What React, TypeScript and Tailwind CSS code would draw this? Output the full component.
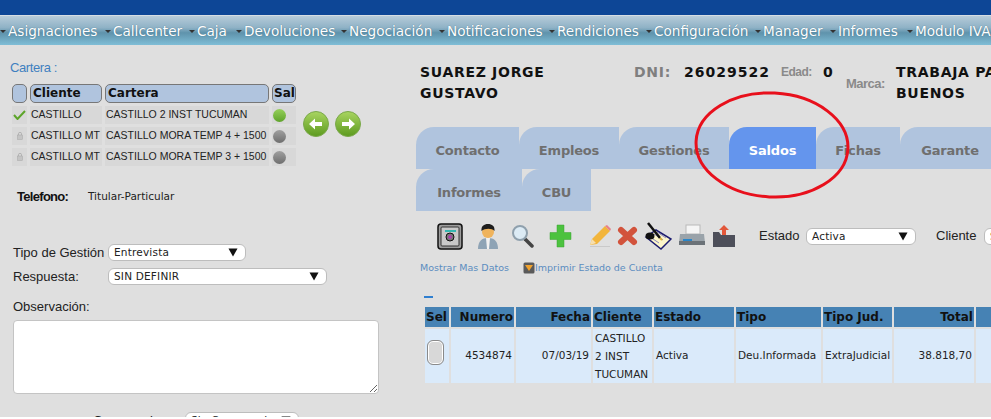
const menu = [
  { label: "Asignaciones", cls: "w-[105px]" },
  { label: "Callcenter", cls: "w-[84px]" },
  { label: "Caja", cls: "w-[47px]" },
  { label: "Devoluciones", cls: "w-[105px]" },
  { label: "Negociación", cls: "w-[98px]" },
  { label: "Notificaciones", cls: "w-[110px]" },
  { label: "Rendiciones", cls: "w-[97px]" },
  { label: "Configuración", cls: "w-[109px]" },
  { label: "Manager", cls: "w-[75px]" },
  { label: "Informes", cls: "w-[77px]" },
  { label: "Modulo IVA", cls: "w-[90px]" },
];

const tabsOne = [
  { label: "Contacto", cls: "w-[103px]" },
  { label: "Empleos", cls: "w-[100px]" },
  { label: "Gestiones", cls: "w-[110px]" },
  { label: "Saldos", cls: "w-[87px]", active: true },
  { label: "Fichas", cls: "w-[84px]" },
  { label: "Garante", cls: "w-[100px]" },
];

const tabsTwo = [
  { label: "Informes", cls: "w-[106px]" },
  { label: "CBU", cls: "w-[69px]" },
];

const carteras = [
  { cliente: "CASTILLO", cartera: "CASTILLO 2 INST TUCUMAN", active: true },
  { cliente: "CASTILLO MT", cartera: "CASTILLO MORA TEMP 4 + 1500" },
  { cliente: "CASTILLO MT", cartera: "CASTILLO MORA TEMP 3 + 1500" },
];

const Caret = () => (
  <svg width="10" height="9" viewBox="0 0 10 9" className="shrink-0">
    <path d="M0.5 0.5h9L5 8.5z" fill="#111" />
  </svg>
);

const Select = ({ text, cls }: { text: string; cls: string }) => (
  <div
    className={`flex items-center justify-between h-[17px] bg-white border border-[#bdbdbd] rounded-[6px] pl-[5px] pr-[7px] text-[10.5px] leading-[15px] whitespace-nowrap text-[#222] font-['DejaVu_Sans',sans-serif] tracking-[0.2px] ${cls}`}
  >
    <span>{text}</span>
    <Caret />
  </div>
);

const ArrowButton = ({ dir }: { dir: "left" | "right" }) => (
  <svg width="26" height="26" viewBox="0 0 26 26">
    <defs>
      <linearGradient id={`g-${dir}`} x1="0" y1="0" x2="0" y2="1">
        <stop offset="0" stopColor="#a9d561" />
        <stop offset="1" stopColor="#5c9a1f" />
      </linearGradient>
    </defs>
    <circle cx="13" cy="13" r="12.5" fill={`url(#g-${dir})`} stroke="#7aa84a" />
    <path
      d={dir === "left" ? "M6 13l6-5.5v3.5h7v4h-7v3.5z" : "M20 13l-6-5.5v3.5H7v4h7v3.5z"}
      fill="#fff"
    />
  </svg>
);

const SafeIcon = () => (
  <svg width="26" height="27" viewBox="0 0 26 27" className="shrink-0">
    <rect x="1" y="1" width="24" height="25" rx="3" fill="#9c9c9c" stroke="#111" strokeWidth="1.5" />
    <rect x="4" y="4" width="18" height="19" rx="1" fill="#c9c9c9" stroke="#333" />
    <rect x="8" y="7" width="11" height="2" fill="#34b7b0" />
    <circle cx="13" cy="14" r="4" fill="#777" stroke="#111" />
    <circle cx="13" cy="14" r="1.800" fill="#b13bb5" />
  </svg>
);

const PersonIcon = () => (
  <svg width="22" height="27" viewBox="0 0 22 27">
    <path d="M1 26c0-8 4-11 10-11s10 3 10 11z" fill="#8ea3b5" />
    <path d="M9 15h4l-1 11h-2z" fill="#f1f1f1" />
    <circle cx="11" cy="9" r="6" fill="#efb35c" />
    <path d="M4.5 8C4 3 7 1 11 1s7 2 6.5 7C15 5 8 5 4.5 8z" fill="#1d1d1d" />
  </svg>
);

const SearchIcon = () => (
  <svg width="23" height="24" viewBox="0 0 23 24">
    <path d="M14 15l7 7" stroke="#444" strokeWidth="3.5" strokeLinecap="round" />
    <circle cx="9" cy="9" r="7" fill="#dcebf5" stroke="#8fa0ad" strokeWidth="2" />
  </svg>
);

const PlusIcon = () => (
  <svg width="23" height="24" viewBox="0 0 23 24">
    <path d="M8 1h7v7.500h7v7h-7V23H8v-7.500H1v-7h7z" fill="#4cc23f" stroke="#3aa232" strokeWidth="0.5" />
  </svg>
);

const PencilIcon = () => (
  <svg width="23" height="24" viewBox="0 0 23 24">
    <path d="M1 21l2-6L16 2l5 5L8 20z" fill="#f2b53c" />
    <path d="M16 2l2-1 4 4-1 2z" fill="#e8808a" />
    <path d="M1 21l2-6 4 4z" fill="#f6dfb0" />
    <rect x="1" y="22" width="20" height="1" fill="#c9c9c9" />
  </svg>
);

const CrossIcon = () => (
  <svg width="23" height="24" viewBox="0 0 23 24">
    <path d="M5 6l13 12M18 6L5 18" stroke="#d2533c" strokeWidth="6" strokeLinecap="round" />
  </svg>
);

const NotesIcon = () => (
  <svg width="28" height="29" viewBox="0 0 28 29">
    <path d="M2 15l10-7 15 9-10 10z" fill="#fdf6c9" stroke="#1c1c70" strokeWidth="1.5" />
    <path d="M6 15l9 6M10 12l9 6M13 10l9 6" stroke="#6d6dc0" strokeWidth="0.8" />
    <path d="M4 1l12 15" stroke="#111" strokeWidth="2.500" />
    <ellipse cx="6" cy="14" rx="4.500" ry="3.500" fill="#111" />
    <path d="M16 16l2 2" stroke="#d9b23a" strokeWidth="2" />
  </svg>
);

const PrinterIcon = () => (
  <svg width="28" height="24" viewBox="0 0 28 24">
    <rect x="8" y="1" width="14" height="9" fill="#f5f5f5" stroke="#b9b9b9" />
    <path d="M2 10h24l1 9H1z" fill="#9aa3aa" />
    <rect x="1" y="17" width="26" height="4" fill="#6b7278" />
    <rect x="5" y="15" width="9" height="2" fill="#2a86c9" />
  </svg>
);

const FolderIcon = () => (
  <svg width="24" height="24" viewBox="0 0 24 24">
    <path d="M1 8h6l2 3h14v12H1z" fill="#4d4f5a" />
    <path d="M12 1l5 5h-3v5h-4V6H7z" fill="#e2573a" />
  </svg>
);

const Coin = () => (
  <svg width="12" height="12" viewBox="0 0 12 12" className="shrink-0">
    <rect x="0.500" y="0.500" width="11" height="11" rx="1.500" fill="#5a5a5a" />
    <path d="M2 3h8L6 9z" fill="#f0a22e" />
  </svg>
);

const Dot = ({ on }: { on?: boolean }) => (
  <div className={`w-[13px] h-[13px] rounded-full ${on ? "bg-[linear-gradient(180deg,#95d05a,#5fa32b)]" : "bg-[linear-gradient(180deg,#a0a0a0,#6e6e6e)]"}`} />
);

const Lock = () => (
  <svg width="6" height="8" viewBox="0 0 6 8">
    <rect x="0.500" y="3" width="5" height="4.500" fill="#c4c4c4" stroke="#a5a5a5" strokeWidth="0.500" />
    <path d="M1.500 3V1.800a1.500 1.500 0 0 1 3 0V3" fill="none" stroke="#a5a5a5" strokeWidth="0.700" />
  </svg>
);

const headCell = "bg-[#4682b4] text-[#111] font-bold text-[12px] h-[20px] px-[1px] align-middle border-0";
const bodyCell = "bg-[#daeafa] text-[#222] text-[10.5px] align-middle px-[2px] border-0";

export default function App() {
  return (
    <div className="w-[991px] h-[419px] overflow-hidden bg-white">
      <div className="relative h-[417px] overflow-hidden bg-[#dfdfdf] font-['DejaVu_Sans',sans-serif]">
        {/* top bars */}
        <div className="h-[15px] bg-[#0d4696]" />
        <div className="flex h-[30px] items-center pt-[2px] border-t border-[#d5dde3] bg-[linear-gradient(180deg,#b6cbd9_0%,#8fb2c6_40%,#5f93ac_58%,#7fbdd6_100%)] overflow-hidden whitespace-nowrap">
          {menu.map((m) => (
            <div key={m.label} className={`flex items-center shrink-0 ${m.cls}`}>
              <span className="w-0 h-0 mr-[3px] border-x-[3px] border-x-transparent border-t-[3px] border-t-[#333]" />
              <span className="text-[13.6px] text-white [text-shadow:0_0_1px_#3d6a82] -ml-[1px]">{m.label}</span>
            </div>
          ))}
        </div>

        <div className="flex">
          {/* left column */}
          <div className="w-[416px] shrink-0 pt-[15px] font-['Liberation_Sans',sans-serif]">
            <div className="pl-[10px] text-[13px] leading-[15px] text-[#3f7fbf] tracking-[-0.4px]">Cartera :</div>
            <div className="flex items-start pl-[12px] mt-[9px]">
              <div className="flex flex-col gap-[3px] w-[284px]">
                <div className="flex gap-[3px] h-[19px] font-['DejaVu_Sans',sans-serif] text-[12px] font-bold text-[#111]">
                  <div className="w-[15px] bg-[#b0c4de] border border-[#777] rounded-[5px]" />
                  <div className="w-[72px] bg-[#b0c4de] border border-[#777] rounded-[5px] pl-[2px] leading-[17px]">Cliente</div>
                  <div className="w-[164px] bg-[#b0c4de] border border-[#777] rounded-[5px] pl-[2px] leading-[17px]">Cartera</div>
                  <div className="w-[24px] bg-[#b0c4de] border border-[#777] rounded-[5px] pl-[1px] leading-[17px]">Sal</div>
                </div>
                {carteras.map((c) => (
                  <div key={c.cartera} className="flex gap-[3px] h-[18px] text-[10.5px] leading-[17px] text-[#222] whitespace-nowrap">
                    <div className="w-[15px] bg-[#d8d8d8] flex items-center justify-center">
                      {c.active ? (
                        <svg width="13" height="10" viewBox="0 0 13 10">
                          <path d="M1 5l3.500 4L12 1" fill="none" stroke="#5da52a" strokeWidth="2" />
                        </svg>
                      ) : (
                        <Lock />
                      )}
                    </div>
                    <div className="w-[72px] bg-[#d8d8d8] pl-[1px] overflow-hidden">{c.cliente}</div>
                    <div className="w-[164px] bg-[#d8d8d8] pl-[1px] overflow-hidden">{c.cartera}</div>
                    <div className="w-[24px] bg-[#d8d8d8] flex items-center pl-[1px]">
                      <Dot on={c.active} />
                    </div>
                  </div>
                ))}
              </div>
              <div className="flex gap-[6px] ml-[7px] mt-[27px]">
                <ArrowButton dir="left" />
                <ArrowButton dir="right" />
              </div>
            </div>

            <div className="flex items-center pl-[17px] mt-[21px]">
              <span className="w-[71px] text-[13px] font-bold tracking-[-0.7px] text-[#111]">Telefono:</span>
              <span className="font-['DejaVu_Sans',sans-serif] text-[10.5px] text-[#222]">Titular-Particular</span>
            </div>

            <div className="flex items-center pl-[13px] mt-[37px] text-[13px] leading-[17px] text-[#222]">
              <span className="w-[95px]">Tipo de Gestión</span>
              <Select text="Entrevista" cls="w-[138px]" />
            </div>
            <div className="flex items-center pl-[13px] mt-[7px] text-[13px] leading-[17px] text-[#222]">
              <span className="w-[95px]">Respuesta:</span>
              <Select text="SIN DEFINIR" cls="w-[219px]" />
            </div>
            <div className="pl-[13px] mt-[14px] text-[13px] leading-[15px] text-[#222]">Observación:</div>
            <div className="ml-[13px] mt-[6px] w-[366px]">
              <textarea readOnly className="block w-full h-[74px] bg-white border border-[#c4c4c4] rounded-[4px] outline-none" />
            </div>
            <div className="flex items-center pl-[93px] mt-[18px] text-[13px] leading-[17px] text-[#222]">
              <span className="w-[92px]">Compromiso:</span>
              <Select text="Sin Compromiso" cls="w-[114px]" />
            </div>
          </div>

          {/* right column */}
          <div className="flex-1 min-w-0 overflow-hidden">
            <div className="flex items-start pt-[17px] pl-[4px] h-[82px] whitespace-nowrap text-[14px] font-bold text-[#111] leading-[21px] tracking-[0.7px]">
              <div className="w-[214px] shrink-0">
                SUAREZ JORGE
                <br />
                GUSTAVO
              </div>
              <span className="text-[#7f7f7f] w-[50px] shrink-0">DNI:</span>
              <span className="tracking-[1px] w-[97px] shrink-0">26029522</span>
              <span className="font-['Liberation_Sans',sans-serif] text-[12px] text-[#8a8a8a] tracking-[-0.5px] w-[42px] shrink-0">Edad:</span>
              <span className="w-[23px] shrink-0">0</span>
              <span className="font-['Liberation_Sans',sans-serif] text-[13px] text-[#8a8a8a] tracking-[-0.5px] w-[50px] shrink-0 mt-[11px]">Marca:</span>
              <div className="shrink-0">
                TRABAJA PARTICULAR
                <br />
                BUENOS
              </div>
            </div>

            <div className="flex h-[42px] whitespace-nowrap">
              {tabsOne.map((t) => (
                <div
                  key={t.label}
                  className={`shrink-0 flex items-center justify-center pt-[6px] rounded-tl-[18px] text-[13px] tracking-[-0.2px] font-bold ${t.cls} ${t.active ? "bg-[#6495ed] text-white" : "bg-[#b0c4de] text-[#6f6f6f]"}`}
                >
                  {t.label}
                </div>
              ))}
            </div>
            <div className="flex h-[42px] whitespace-nowrap">
              {tabsTwo.map((t) => (
                <div key={t.label} className={`shrink-0 flex items-center justify-center pt-[6px] rounded-tl-[18px] bg-[#b0c4de] text-[#6f6f6f] text-[13px] tracking-[-0.2px] font-bold ${t.cls}`}>
                  {t.label}
                </div>
              ))}
            </div>

            <div className="flex items-center h-[28px] mt-[11px] pl-[21px] whitespace-nowrap [&>div]:shrink-0 [&>svg]:shrink-0">
              <SafeIcon />
              <div className="ml-[14px]"><PersonIcon /></div>
              <div className="ml-[12px]"><SearchIcon /></div>
              <div className="ml-[15px]"><PlusIcon /></div>
              <div className="ml-[17px]"><PencilIcon /></div>
              <div className="ml-[4px]"><CrossIcon /></div>
              <div className="ml-[5px]"><NotesIcon /></div>
              <div className="ml-[6px]"><PrinterIcon /></div>
              <div className="ml-[6px]"><FolderIcon /></div>
              <span className="ml-[23px] w-[47px] shrink-0 font-['Liberation_Sans',sans-serif] text-[13px] text-[#222]">Estado</span>
              <Select text="Activa" cls="w-[110px]" />
              <span className="ml-[20px] w-[48px] font-['Liberation_Sans',sans-serif] text-[13px] text-[#222] shrink-0">Cliente</span>
              <Select text="Sin" cls="w-[60px]" />
            </div>

            <div className="flex items-center pl-[4px] mt-[11px] h-[14px] font-['DejaVu_Sans',sans-serif] text-[9.5px] text-[#5b8dbf] whitespace-nowrap">
              <span className="w-[103px]">Mostrar Mas Datos</span>
              <Coin />
              <span>Imprimir Estado de Cuenta</span>
            </div>

            <div className="ml-[8px] mt-[21px] w-[9px] h-[2px] bg-[#2f7fd0]" />

            <table className="ml-[7px] mt-[7px] table-fixed border-separate border-spacing-[2px] w-[615px] max-w-none whitespace-nowrap">
              <colgroup>
                <col className="w-[24px]" />
                <col className="w-[63px]" />
                <col className="w-[75px]" />
                <col className="w-[59px]" />
                <col className="w-[80px]" />
                <col className="w-[85px]" />
                <col className="w-[69px]" />
                <col className="w-[80px]" />
                <col className="w-[60px]" />
              </colgroup>
              <thead>
                <tr>
                  <th className={`${headCell} text-left`}>Sel</th>
                  <th className={`${headCell} text-right`}>Numero</th>
                  <th className={`${headCell} text-right`}>Fecha</th>
                  <th className={`${headCell} text-left`}>Cliente</th>
                  <th className={`${headCell} text-left`}>Estado</th>
                  <th className={`${headCell} text-left`}>Tipo</th>
                  <th className={`${headCell} text-left`}>Tipo Jud.</th>
                  <th className={`${headCell} text-right`}>Total</th>
                  <th className={headCell} />
                </tr>
              </thead>
              <tbody>
                <tr className="h-[54px]">
                  <td className={bodyCell}>
                    <div className="w-[17px] h-[25px] mb-[7px] rounded-[6px] border border-[#8a8a8a] bg-[#d8d8d8] shadow-[inset_0_0_0_1px_#fff]" />
                  </td>
                  <td className={`${bodyCell} text-right`}>4534874</td>
                  <td className={`${bodyCell} text-right`}>07/03/19</td>
                  <td className={`${bodyCell} whitespace-normal leading-[18px] px-[1px]`}>CASTILLO 2 INST TUCUMAN</td>
                  <td className={bodyCell}>Activa</td>
                  <td className={bodyCell}>Deu.Informada</td>
                  <td className={bodyCell}>ExtraJudicial</td>
                  <td className={`${bodyCell} text-right`}>38.818,70</td>
                  <td className={bodyCell} />
                </tr>
              </tbody>
            </table>

            <div className="mt-[32px] ml-[4px] h-[1px] bg-[#ececec]" />
          </div>
        </div>

        {/* hand drawn circle over the screenshot */}
        <svg className="absolute left-[690px] top-[88px] pointer-events-none" width="165" height="115" viewBox="0 0 165 115">
          <ellipse cx="82" cy="57" rx="76" ry="52" fill="none" stroke="#e8101c" strokeWidth="3" transform="rotate(3 82 57)" />
        </svg>
      </div>
    </div>
  );
}
